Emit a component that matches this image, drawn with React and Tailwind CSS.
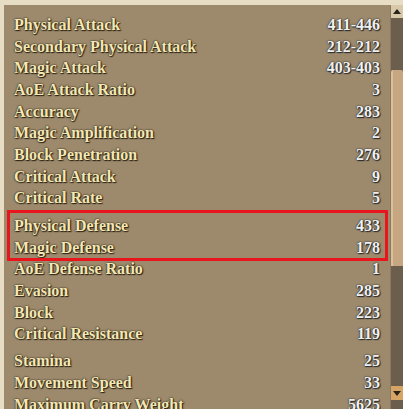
import React from 'react';

const groups = [
  [
    ['Physical Attack', '411-446'],
    ['Secondary Physical Attack', '212-212'],
    ['Magic Attack', '403-403'],
    ['AoE Attack Ratio', '3'],
    ['Accuracy', '283'],
    ['Magic Amplification', '2'],
    ['Block Penetration', '276'],
    ['Critical Attack', '9'],
    ['Critical Rate', '5'],
  ],
  [
    ['Physical Defense', '433'],
    ['Magic Defense', '178'],
    ['AoE Defense Ratio', '1'],
    ['Evasion', '285'],
    ['Block', '223'],
    ['Critical Resistance', '119'],
  ],
  [
    ['Stamina', '25'],
    ['Movement Speed', '33'],
    ['Maximum Carry Weight', '5625'],
  ],
];

function Row({ label, value }) {
  return (
    <div className="flex h-[21.7px] items-center justify-between">
      <span className="text-[#f3e7b4] [text-shadow:0_0_1px_#2e2416,0_0_2px_#2e2416,1px_1px_1px_#2e2416]">{label}</span>
      <span className="text-[#f0f0f0] [text-shadow:0_0_1px_#2a2a2a,0_0_2px_#2a2a2a,1px_1px_1px_#2a2a2a]">{value}</span>
    </div>
  );
}

export default function App() {
  return (
    <div className="w-[403px] h-[409px] overflow-hidden bg-[#e7ddc4] pt-[5px] pl-[4px] flex font-['Liberation_Serif',serif] text-[16px] font-bold">
      {/* stat list */}
      <div className="flex-1 bg-[#9d8a6d] pl-[10px] pr-[10px] pt-[9px]">
        <div>
          {groups[0].map(([l, v]) => <Row key={l} label={l} value={v} />)}
        </div>
        <div className="mt-[6px] relative">
          <div className="absolute -top-[5px] -left-[7px] -right-[8px] h-[51px] border-[3px] border-[#e8151d]" />
          {groups[1].map(([l, v]) => <Row key={l} label={l} value={v} />)}
        </div>
        <div className="mt-[5px]">
          {groups[2].map(([l, v]) => <Row key={l} label={l} value={v} />)}
        </div>
      </div>

      {/* scrollbar */}
      <div className="w-[13px] flex flex-col bg-[#6c5e4c] border-l border-[#8a7860]">
        <div className="h-[13px] bg-[#d8c9a8] flex items-center justify-center">
          <svg width="8" height="5" viewBox="0 0 8 5"><path d="M0 5 L4 0 L8 5 Z" fill="#2a2218" /></svg>
        </div>
        <div className="h-[52px]" />
        <div className="h-[196px] bg-[#c7a682] border-l-2 border-[#dcc09c] rounded-t-[2px]" />
        <div className="flex-1" />
        <div className="h-[14px] bg-[#d6a565] flex items-center justify-center mb-[9px]">
          <svg width="8" height="5" viewBox="0 0 8 5"><path d="M0 0 L8 0 L4 5 Z" fill="#2a2218" /></svg>
        </div>
      </div>
    </div>
  );
}
